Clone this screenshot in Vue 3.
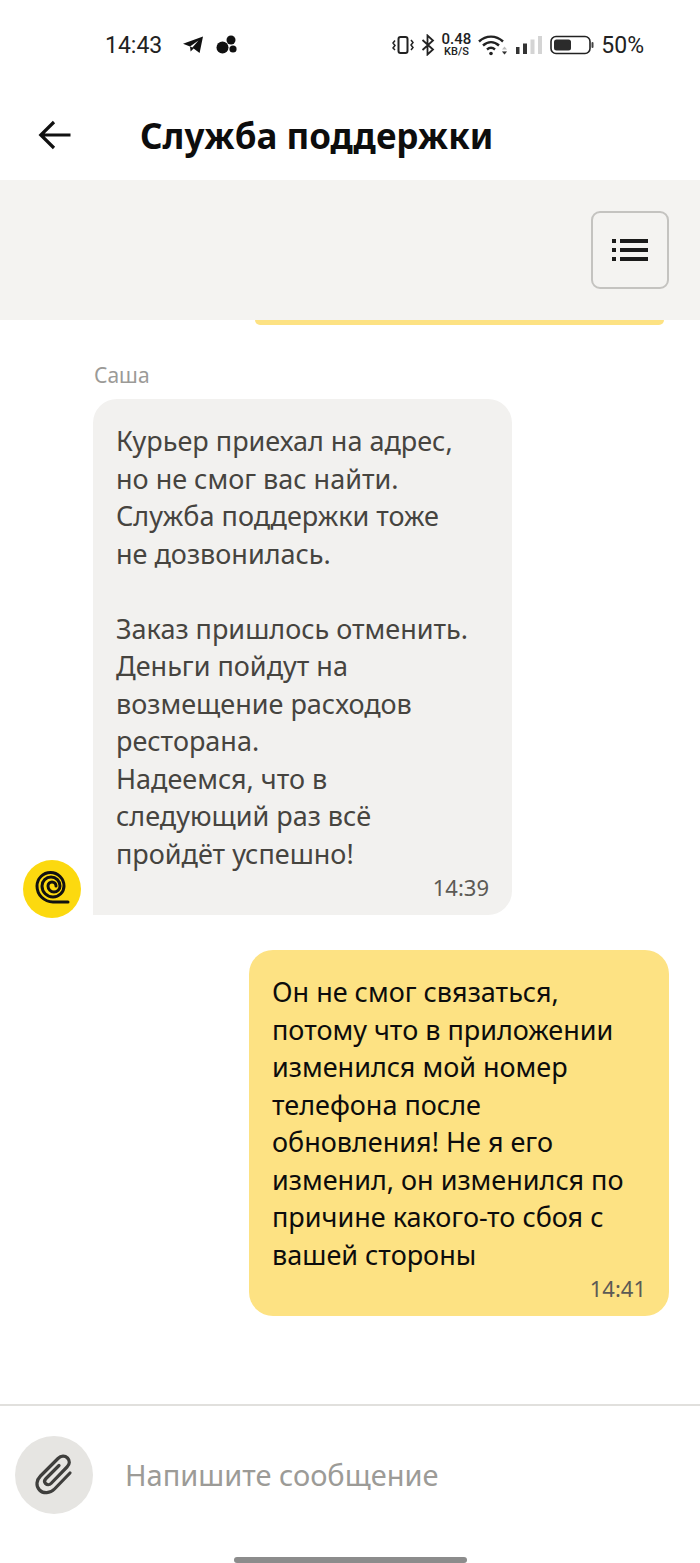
<script setup>
const incoming = `Курьер приехал на адрес,
но не смог вас найти.
Служба поддержки тоже
не дозвонилась.

Заказ пришлось отменить.
Деньги пойдут на
возмещение расходов
ресторана.
Надеемся, что в
следующий раз всё
пройдёт успешно!`

const outgoing = `Он не смог связаться,
потому что в приложении
изменился мой номер
телефона после
обновления! Не я его
изменил, он изменился по
причине какого-то сбоя с
вашей стороны`
</script>

<template>
  <div class="screen">
    <!-- Status bar -->
    <div class="status">
      <div class="status-left">
        <span class="clock">14:43</span>
        <svg class="tg" width="22" height="18" viewBox="0 0 22 18">
          <path d="M21 0.5 17.6 17 11.6 12.6 8.6 15.6 8 10.6 1 7.8Z" fill="#111" />
          <path d="M8 10.6 16.5 4.6 10.4 11.6" fill="#fff" />
        </svg>
        <svg width="22" height="20" viewBox="0 0 22 20">
          <circle cx="6.5" cy="12.5" r="6" fill="#111" />
          <circle cx="15" cy="5" r="4.5" fill="#111" />
          <circle cx="17" cy="14" r="3.6" fill="#111" />
        </svg>
      </div>
      <div class="status-right">
        <svg width="22" height="20" viewBox="0 0 22 20" fill="none" stroke="#222">
          <rect x="6.5" y="2" width="9" height="16" rx="2" stroke-width="2" />
          <path d="M3 5.500 1 8 3 10.500 1 13 3 15M19 5 21 7.500 19 10 21 12.500 19 15" stroke-width="1.500" />
        </svg>
        <svg class="bt" width="14" height="22" viewBox="0 0 14 22" fill="none" stroke="#222" stroke-width="1.800">
          <path d="M1.500 6 12 15.500 6.500 20.500V1.500L12 6.500 1.500 16" />
        </svg>
        <div class="speed"><span>0.48</span><span class="unit">KB/S</span></div>
        <svg class="wifi" width="30" height="22" viewBox="0 0 30 22" fill="none" stroke="#222" stroke-width="2.400">
          <path d="M1 7.500C8 1 18 1 25 7.500M5 11.500C10 7 16 7 21 11.500M9 15.500C11.500 13.300 14.500 13.300 17 15.500" />
          <circle cx="13" cy="19.500" r="1.800" fill="#222" stroke="none" />
          <path d="M24 15.500 26.500 12.500 29 15.500ZM24 17.500 26.500 20.500 29 17.500Z" fill="#bbb" stroke="none" />
          <path d="M24 17.500 26.500 20.500 29 17.500Z" fill="#333" stroke="none" />
        </svg>
        <svg width="28" height="20" viewBox="0 0 28 20">
          <rect x="1" y="12" width="3.500" height="7" fill="#333" />
          <rect x="8" y="8.500" width="4" height="10.500" fill="#333" />
          <rect x="15.500" y="4.500" width="4" height="14.500" fill="#d4d4d4" />
          <rect x="23" y="1" width="4" height="18" fill="#d4d4d4" />
        </svg>
        <svg width="44" height="20" viewBox="0 0 44 20">
          <rect x="1" y="1.500" width="39" height="17" rx="5" fill="none" stroke="#222" stroke-width="1.600" />
          <rect x="4" y="4.500" width="17" height="11" rx="2.500" fill="#2b2b2b" />
          <rect x="41.500" y="7" width="2" height="6" rx="1" fill="#444" />
        </svg>
        <span class="battery">50%</span>
      </div>
    </div>

    <!-- Title -->
    <header class="header">
      <svg width="34" height="30" viewBox="0 0 34 30" fill="none" stroke="#111" stroke-width="3.200">
        <path d="M32.500 15H3M16 2 2.800 15 16 28" />
      </svg>
      <h1>Служба поддержки</h1>
    </header>

    <div class="toolbar">
      <button class="list-btn">
        <svg width="36" height="24" viewBox="0 0 36 24" fill="#1a1a1a">
          <rect x="0" y="1" width="4" height="4" />
          <rect x="8" y="1" width="28" height="4" />
          <rect x="0" y="10" width="4" height="4" />
          <rect x="8" y="10" width="28" height="4" />
          <rect x="0" y="19" width="4" height="4" />
          <rect x="8" y="19" width="28" height="4" />
        </svg>
      </button>
    </div>

    <!-- Messages -->
    <main class="chat">
      <div class="prev-bubble"></div>
      <div class="sender">Саша</div>
      <div class="row-in">
        <div class="avatar">
          <svg width="58" height="58" viewBox="0 0 58 58" fill="none" stroke="#111" stroke-width="3" stroke-linecap="round">
            <path d="M33 26A4 4 0 0 0 25 26A6 6 0 0 0 37 26A9 9 0 0 0 19 26A11 11 0 0 0 41 26A13.500 13.500 0 0 0 14 26A16 16 0 0 0 30 42H45" />
          </svg>
        </div>
        <div class="bubble incoming">
          <div class="text">{{ incoming }}</div>
          <div class="time">14:39</div>
        </div>
      </div>
      <div class="bubble outgoing">
        <div class="text">{{ outgoing }}</div>
        <div class="time">14:41</div>
      </div>
    </main>

    <!-- Input -->
    <footer class="composer">
      <div class="input-row">
        <button class="attach">
          <svg width="44" height="44" viewBox="0 0 44 44" fill="none" stroke="#3f3f3d" stroke-width="3.200" stroke-linecap="round" stroke-linejoin="round">
            <path d="M38 20 22.500 36C18 40.500 11.500 41 7.500 37C3.500 33 4.500 27 8.500 23L26 5.500C29 2.500 33 2.500 35.500 5C38 7.500 38 11 35 14L19 30.500C17.500 32 15 32 13.500 30.500C12 29 12.500 27 14 25.500L27 12.500" />
          </svg>
        </button>
        <span class="placeholder">Напишите сообщение</span>
      </div>
      <div class="home-bar"></div>
    </footer>
  </div>
</template>

<style>
body {
  background: #fff;
}
</style>

<style scoped>
.screen {
  width: 700px;
  height: 1563px;
  display: flex;
  flex-direction: column;
  overflow: hidden;
  background: #fff;
  font-family: "Noto Sans", "Open Sans", sans-serif;
}

.status {
  height: 90px;
  box-sizing: border-box;
  padding: 0 56px 0 105px;
  display: flex;
  justify-content: space-between;
  align-items: center;
  color: #222;
  font-family: Roboto, sans-serif;
}

.status-left,
.status-right {
  display: flex;
  align-items: center;
}

.clock {
  font-size: 23px;
  margin-right: 20px;
}

.tg {
  margin-right: 12px;
}

.status-right {
  gap: 7px;
}

.speed {
  display: flex;
  flex-direction: column;
  align-items: center;
  font-size: 15px;
  line-height: 13px;
  font-weight: 500;
}

.speed .unit {
  font-size: 11px;
  line-height: 11px;
}

.battery {
  font-size: 23px;
}

.header {
  height: 90px;
  box-sizing: border-box;
  padding: 0 0 0 38px;
  display: flex;
  align-items: center;
}

.header h1 {
  margin: 0 0 0 68px;
  font-size: 35px;
  font-weight: 700;
  color: #0d0d0d;
}

.toolbar {
  height: 140px;
  box-sizing: border-box;
  background: #f4f3f1;
  padding: 31px 31px 0 0;
  display: flex;
  justify-content: flex-end;
  align-items: flex-start;
}

.list-btn {
  width: 78px;
  height: 78px;
  padding: 0;
  border: 2px solid #c4c3c0;
  border-radius: 9px;
  background: transparent;
  display: flex;
  align-items: center;
  justify-content: center;
}

.chat {
  flex: 1;
  padding: 0 31px 0 23px;
}

.prev-bubble {
  width: 409px;
  height: 5px;
  margin-left: auto;
  margin-right: 5px;
  background: #fde283;
  border-radius: 0 0 16px 16px;
}

.sender {
  margin: 36px 0 0 71px;
  font-size: 21px;
  line-height: 28px;
  color: #9b9a97;
}

.row-in {
  margin-top: 10px;
  display: flex;
  align-items: flex-end;
  gap: 12px;
}

.avatar {
  width: 58px;
  height: 58px;
  flex: none;
  margin-bottom: -3px;
  border-radius: 50%;
  background: #fcd90f;
}

.bubble {
  box-sizing: border-box;
  width: 419px;
  padding: 23px 23px 13px;
  border-radius: 24px;
  font-size: 27px;
  line-height: 37.5px;
}

.incoming {
  border-bottom-left-radius: 0;
  background: #f2f1ef;
  color: #46443f;
}

.outgoing {
  width: 420px;
  margin: 35px 0 0 auto;
  background: #fde283;
  color: #0c0c0c;
}

.text {
  white-space: pre-line;
}

.time {
  margin-top: 0;
  font-size: 22px;
  line-height: 30px;
  text-align: right;
  color: #5c5a55;
}

.composer {
  border-top: 2px solid #e1e0dd;
}

.input-row {
  height: 142px;
  box-sizing: border-box;
  padding: 30px 0 0 15px;
  display: flex;
  align-items: flex-start;
}

.attach {
  width: 78px;
  height: 78px;
  flex: none;
  padding: 0;
  border: none;
  border-radius: 50%;
  background: #e6e5e2;
  display: flex;
  align-items: center;
  justify-content: center;
}

.placeholder {
  margin: 19px 0 0 32px;
  font-size: 29px;
  line-height: 40px;
  color: #9c9b97;
}

.home-bar {
  width: 233px;
  height: 6px;
  margin: 9px auto 0;
  border-radius: 3px;
  background: #8c8c8c;
}
</style>
